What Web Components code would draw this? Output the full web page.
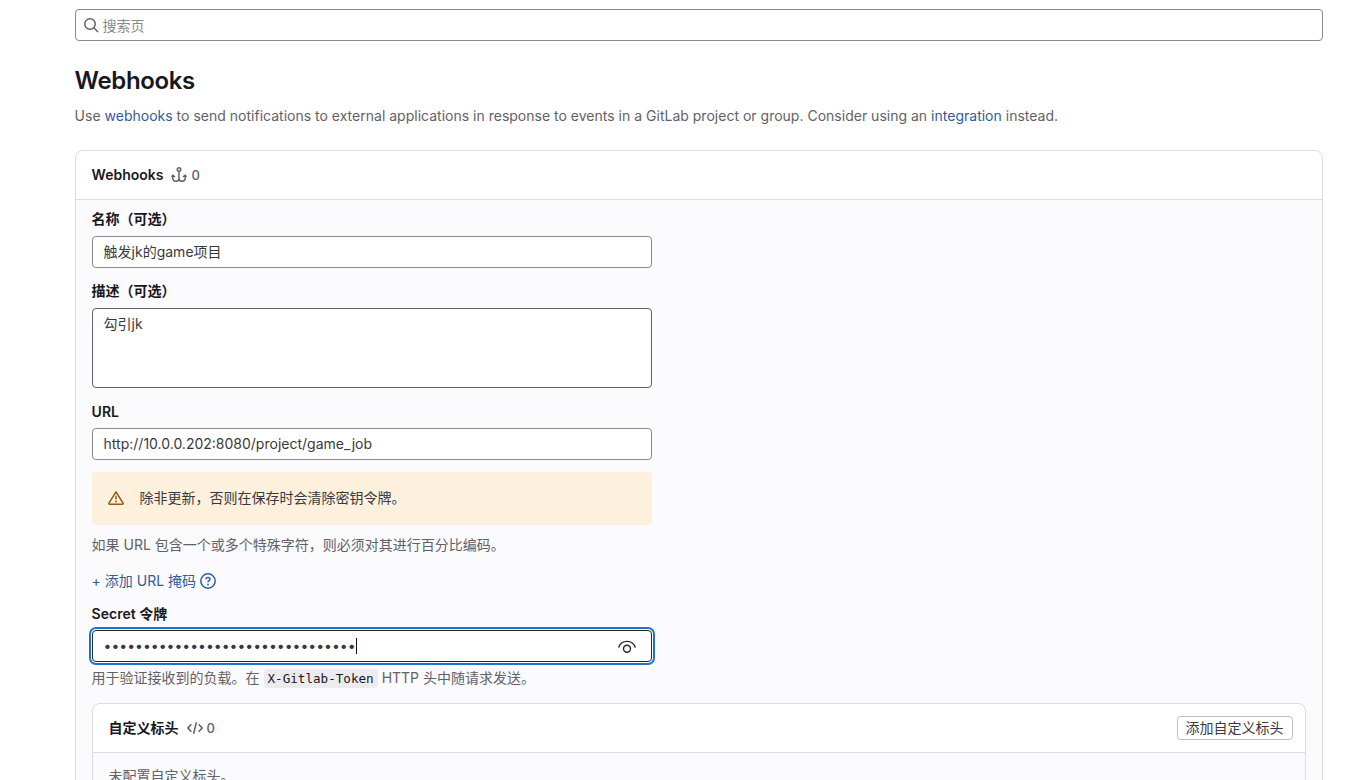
<!DOCTYPE html>
<html lang="zh-CN">
<head>
<meta charset="UTF-8">
<title>Webhooks</title>
<style>
  :root {
    --text: #3a383f;
    --heading: #18171d;
    --subtle: #626168;
    --link: #2f5ca0;
    --border: #dcdcde;
    --border-input: #89888d;
    --bg-subtle: #fbfafd;
  }
  * { box-sizing: border-box; }
  body {
    margin: 0;
    height: 780px;
    overflow: hidden;
    background: #fff;
    color: var(--text);
    font: 14px/20px Inter, "Noto Sans CJK SC", sans-serif;
  }
</style>
</head>
<body>
<webhook-page></webhook-page>

<script>
const ICONS = {
  search: '<circle cx="7" cy="7" r="5.25"/><path d="M11 11l4 4"/>',
  hook: '<circle cx="8" cy="2.6" r="1.75"/><path d="M8 4.4v9.4M1.75 8.4v2.4c0 2.1 1.5 3.5 3.4 3.5 1.7 0 2.85-1.1 2.85-2.8M14.25 8.400v2.400c0 2.100-1.500 3.500-3.400 3.500-1.700 0-2.850-1.100-2.850-2.800M.6 10l1.150-1.600 2.250 1.500M15.400 10l-1.150-1.600-2.250 1.500"/>',
  code: '<path d="M4.3 4.3L.9 8l3.4 3.7M11.7 4.3L15.1 8l-3.4 3.7M9.4 2.2L6.6 13.8"/>',
  warning: '<path d="M8 1.8L.95 13.2c-.25.5 0 1.05.6 1.05h12.9c.6 0 .85-.55.6-1.05z" stroke-linejoin="round"/><path d="M8 5.8v3.6"/><circle cx="8" cy="11.5" r=".9" fill="currentColor" stroke="none"/>',
  question: '<circle cx="8" cy="8" r="7.2"/><path d="M5.9 6.3c.1-1.2 1-1.9 2.1-1.9 1.2 0 2.1.8 2.1 1.8 0 1.5-2.1 1.5-2.1 3.1"/><circle cx="8" cy="11.5" r=".9" fill="currentColor" stroke="none"/>',
  eye: '<path d="M.6 8.6C1.6 5.1 4.5 3 8 3s6.4 2.1 7.4 5.600" stroke-width="1.2"/><circle cx="8" cy="9.500" r="3.100" stroke-width="1.300"/>',
};

class GlIcon extends HTMLElement {
  connectedCallback() {
    const size = this.getAttribute("size") || 16;
    this.attachShadow({ mode: "open" }).innerHTML = `
      <style>
        :host { display: inline-flex; flex: none; width: ${size}px; height: ${size}px; }
        svg { display: block; }
      </style>
      <svg width="${size}" height="${size}" viewBox="0 0 16 16" fill="none" stroke="currentColor" stroke-width="1.5">
        ${ICONS[this.getAttribute("name")]}
      </svg>`;
  }
}

class SearchBox extends HTMLElement {
  connectedCallback() {
    this.attachShadow({ mode: "open" }).innerHTML = `
      <style>
        :host {
          display: flex;
          align-items: center;
          gap: 4px;
          box-sizing: border-box;
          height: 32px;
          padding: 0 7px;
          border: 1px solid var(--border-input);
          border-radius: 4px;
          background: #fff;
          color: #89888d;
        }
        gl-icon { color: #626168; }
        span { padding-top: 1px; }
      </style>
      <gl-icon name="search"></gl-icon>
      <span><slot></slot></span>`;
  }
}

class SettingsCard extends HTMLElement {
  connectedCallback() {
    this.attachShadow({ mode: "open" }).innerHTML = `
      <style>
        :host {
          display: block;
          box-sizing: border-box;
          border: 1px solid var(--border);
          border-radius: 8px;
          background: var(--bg-subtle);
        }
        header {
          display: flex;
          align-items: center;
          box-sizing: border-box;
          height: 49px;
          padding: 0 12px 0 16px;
          border-bottom: 1px solid var(--border);
          border-radius: 8px 8px 0 0;
          background: #fff;
        }
        h2 { margin: 0 8px 0 0; font-size: 14px; font-weight: 600; color: var(--heading); }
        .count {
          display: flex;
          align-items: center;
          gap: 4px;
          color: var(--subtle);
          font-size: 13px;
          font-weight: 500;
        }
        .actions { margin-left: auto; display: flex; }
        .body { padding: 10px 16px; }
      </style>
      <header>
        <h2>${this.getAttribute("heading")}</h2>
        <span class="count"><gl-icon name="${this.getAttribute("icon")}"></gl-icon>0</span>
        <span class="actions"><slot name="actions"></slot></span>
      </header>
      <div class="body"><slot></slot></div>`;
  }
}

class FormField extends HTMLElement {
  connectedCallback() {
    this.attachShadow({ mode: "open" }).innerHTML = `
      <style>
        :host { display: block; width: 560px; }
        .label { height: 20px; margin-bottom: 6px; font-weight: 600; color: var(--heading); }
        :host([optional]) .label { height: 21px; margin: -1px 0 6px; }
        .control {
          display: flex;
          align-items: center;
          box-sizing: border-box;
          height: 32px;
          padding: 0 11px;
          border: 1px solid var(--border-input);
          border-radius: 4px;
          background: #fff;
        }
        :host([multiline]) .control {
          height: 80px;
          align-items: flex-start;
          padding-top: 5px;
          border-color: #626168;
        }
        :host([focused]) .control {
          border-color: #28272d;
          box-shadow: 0 0 0 1px #fff, 0 0 0 3px #1f75cb;
        }
        .caret { width: 1px; height: 16px; background: #18171d; }
        .end { display: flex; margin-left: auto; padding: 1px 4px 0 0; color: #28272d; }
      </style>
      <div class="label">${this.getAttribute("label")}</div>
      <div class="control">
        <slot></slot>
        ${this.hasAttribute("focused") ? '<span class="caret"></span>' : ""}
        <span class="end"><slot name="end"></slot></span>
      </div>`;
  }
}

class AlertBox extends HTMLElement {
  connectedCallback() {
    this.attachShadow({ mode: "open" }).innerHTML = `
      <style>
        :host {
          display: flex;
          align-items: center;
          gap: 16px;
          box-sizing: border-box;
          width: 560px;
          height: 53px;
          padding: 0 16px 1px;
          border-radius: 4px;
          background: #fdf1dd;
        }
        gl-icon { color: #995715; }
      </style>
      <gl-icon name="warning"></gl-icon>
      <span><slot></slot></span>`;
  }
}

class SmallButton extends HTMLElement {
  connectedCallback() {
    this.attachShadow({ mode: "open" }).innerHTML = `
      <style>
        :host { display: block; }
        button {
          display: block;
          box-sizing: border-box;
          height: 24px;
          padding: 0 8px;
          border: 1px solid #bfbfc3;
          border-radius: 4px;
          background: #fff;
          color: var(--text);
          font: inherit;
          line-height: 22px;
        }
      </style>
      <button><slot></slot></button>`;
  }
}

class WebhookPage extends HTMLElement {
  connectedCallback() {
    this.attachShadow({ mode: "open" }).innerHTML = `
      <style>
        :host { display: block; padding: 9px 26.4px 0 74.6px; }
        h1 {
          margin: 25px 0 0;
          font-size: 24px;
          line-height: 30px;
          font-weight: 600;
          letter-spacing: -0.36px;
          color: var(--heading);
        }
        .intro { margin: 10px 0 24px; color: var(--subtle); letter-spacing: 0.007px; }
        a { color: var(--link); text-decoration: none; }
        .outer { height: 700px; }
        .name, .desc { margin-bottom: 14px; }
        alert-box { margin-top: 12px; }
        .help { color: var(--subtle); }
        .url-help { margin-top: 10px; }
        .mask { display: flex; align-items: center; gap: 4px; height: 20px; margin: 16px 0 13px; color: var(--link); }
        .token-help { margin: 6px 0 15px; }
        code {
          padding: 2px 4px;
          border-radius: 4px;
          background: #ececef;
          color: var(--heading);
          font: 12.6px "DejaVu Sans Mono", monospace;
        }
        .inner { height: 200px; }
        .empty { color: var(--subtle); padding-top: 3px; }
      </style>
      <search-box>搜索页</search-box>
      <h1>Webhooks</h1>
      <div class="intro">Use <a>webhooks</a> to send notifications to external applications in response to events in a GitLab project or group. Consider using an <a>integration</a> instead.</div>
      <settings-card class="outer" heading="Webhooks" icon="hook">
        <form-field class="name" label="名称（可选）" optional>触发jk的game项目</form-field>
        <form-field class="desc" label="描述（可选）" optional multiline>勾引jk</form-field>
        <form-field label="URL">http://10.0.0.202:8080/project/game_job</form-field>
        <alert-box>除非更新，否则在保存时会清除密钥令牌。</alert-box>
        <div class="help url-help">如果 URL 包含一个或多个特殊字符，则必须对其进行百分比编码。</div>
        <div class="mask"><a>+ 添加 URL 掩码</a><gl-icon name="question"></gl-icon></div>
        <form-field label="Secret 令牌" focused>
          <span>${"•".repeat(32)}</span>
          <gl-icon slot="end" name="eye" size="18"></gl-icon>
        </form-field>
        <div class="help token-help">用于验证接收到的负载。在 <code>X-Gitlab-Token</code> HTTP 头中随请求发送。</div>
        <settings-card class="inner" heading="自定义标头" icon="code">
          <small-button slot="actions">添加自定义标头</small-button>
          <div class="empty">未配置自定义标头。</div>
        </settings-card>
      </settings-card>`;
  }
}

customElements.define("gl-icon", GlIcon);
customElements.define("search-box", SearchBox);
customElements.define("settings-card", SettingsCard);
customElements.define("form-field", FormField);
customElements.define("alert-box", AlertBox);
customElements.define("small-button", SmallButton);
customElements.define("webhook-page", WebhookPage);
</script>
</body>
</html>
